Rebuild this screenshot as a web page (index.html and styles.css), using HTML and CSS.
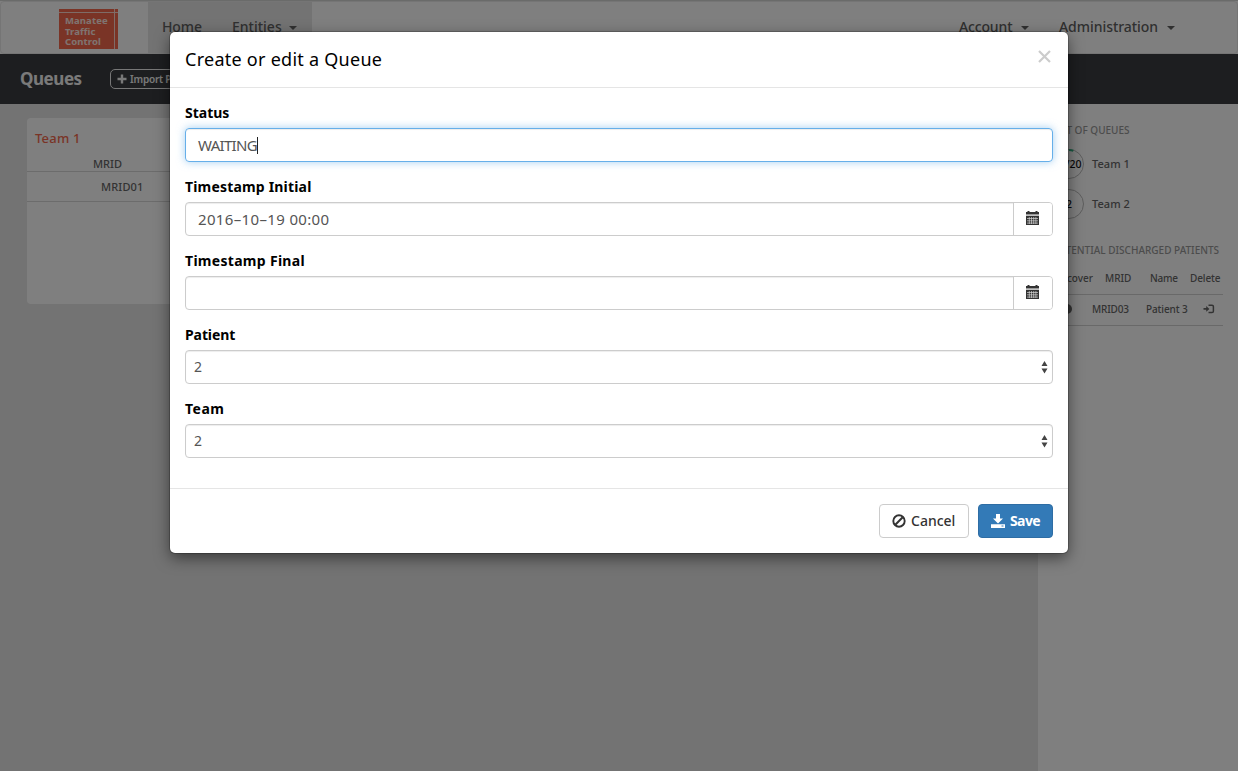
FILE: index.html
```html
<!DOCTYPE html>
<html lang="en">
<head>
<meta charset="utf-8">
<title>Manatee Traffic Control</title>
<link rel="stylesheet" href="styles.css">
</head>
<body>
<div class="app">
  <nav class="navbar">
    <div class="logo"><span class="logo-text">Manatee<br>Traffic<br>Control</span></div>
    <div class="nav-left">
      <span class="nav-home">Home</span>
      <span class="nav-entities">Entities</span><i class="caret"></i>
    </div>
    <div class="nav-right">
      <span class="nav-account">Account</span><i class="caret"></i>
      <span class="nav-admin">Administration</span><i class="caret"></i>
    </div>
  </nav>
  <header class="toolbar">
    <h1 class="toolbar-title">Queues</h1>
    <button class="import"><svg width="10" height="10" viewBox="0 0 10 10"><path d="M5 .5v9M.5 5h9" stroke="currentColor" stroke-width="2.4"/></svg>Import Patient</button>
  </header>
  <div class="content">
    <main class="board">
      <section class="team-card">
        <h2 class="team-title">Team 1</h2>
        <div class="team-head">MRID</div>
        <div class="team-row">MRID01</div>
      </section>
    </main>
    <aside class="sidebar">
      <h3 class="side-title">LIST OF QUEUES</h3>
      <div class="queue"><div class="ring ring-progress">2/20<svg class="arc" width="30" height="30" viewBox="0 0 30 30"><path d="M15 1A14 14 0 0 1 19.3 1.7" fill="none" stroke="#30b384" stroke-width="2"/></svg></div><span class="queue-name">Team 1</span></div>
      <div class="queue"><div class="ring">2</div><span class="queue-name">Team 2</span></div>
      <h3 class="side-title discharged">POTENTIAL DISCHARGED PATIENTS</h3>
      <div class="patients patients-head"><span class="p-recover">Recover</span><span class="p-mrid-head">MRID</span><span class="p-name-head">Name</span><span class="p-delete">Delete</span></div>
      <div class="patients patients-row">
        <span class="dot"></span><span class="p-mrid">MRID03</span><span class="p-name">Patient 3</span>
        <svg class="exit" width="12" height="10" viewBox="0 0 12 10"><path d="M5.5 1.2H9Q10.4 1.2 10.4 2.6V7.2Q10.4 8.6 9 8.6H5.5" fill="none" stroke="currentColor" stroke-width="1.5"/><path d="M.5 4H3.2V2L6.4 4.9 3.2 7.8V5.8H.5Z" fill="currentColor"/></svg>
      </div>
    </aside>
  </div>
</div>
<div class="backdrop">
  <form class="modal">
    <div class="modal-header">
      <h4 class="modal-title">Create or edit a Queue</h4>
      <svg class="close" width="13" height="13" viewBox="0 0 13 13"><path d="M1 1 12 12M12 1 1 12" stroke="currentColor" stroke-width="2.2"/></svg>
    </div>
    <div class="modal-body">
      <div class="field"><span class="label">Status</span><div class="control focused"><span class="v-status">WAITING</span><i class="cursor"></i></div></div>
      <div class="field"><span class="label l-initial">Timestamp Initial</span>
        <div class="control dated"><span class="v-date">2016–10–19 00:00</span><span class="addon"><svg width="13" height="14" viewBox="0 0 13 14"><path fill="#333" d="M0 1H1.5V0H3.5V1H9.5V0H11.5V1H13V3H0ZM0 5H13V14H0Z"/><path fill="#999" d="M0 3H13V4.6H0Z"/><path d="M1 7.5H12M1 9.8H12M1 12.1H12M3.3 6V13M5.5 6V13M7.7 6V13M9.9 6V13" stroke="#ddd" stroke-width=".65"/></svg></span></div></div>
      <div class="field"><span class="label l-final">Timestamp Final</span>
        <div class="control dated"><span></span><span class="addon"><svg width="13" height="14" viewBox="0 0 13 14"><path fill="#333" d="M0 1H1.5V0H3.5V1H9.5V0H11.5V1H13V3H0ZM0 5H13V14H0Z"/><path fill="#999" d="M0 3H13V4.6H0Z"/><path d="M1 7.5H12M1 9.8H12M1 12.1H12M3.3 6V13M5.5 6V13M7.7 6V13M9.9 6V13" stroke="#ddd" stroke-width=".65"/></svg></span></div></div>
      <div class="field"><span class="label l-patient">Patient</span><div class="control select"><span>2</span><svg width="7" height="13" viewBox="0 0 7 13"><path d="M3.5 0 6.5 5H.5ZM.5 7.5H6.5L3.5 12.5Z" fill="#444"/></svg></div></div>
      <div class="field"><span class="label l-team">Team</span><div class="control select"><span>2</span><svg width="7" height="13" viewBox="0 0 7 13"><path d="M3.5 0 6.5 5H.5ZM.5 7.5H6.5L3.5 12.5Z" fill="#444"/></svg></div></div>
    </div>
    <div class="modal-footer">
      <button type="button" class="btn cancel"><svg width="14" height="14" viewBox="0 0 14 14"><circle cx="7" cy="7" r="5.7" fill="none" stroke="currentColor" stroke-width="1.9"/><path d="M3.3 10.7 10.7 3.3" stroke="currentColor" stroke-width="2"/></svg><span class="t-cancel">Cancel</span></button>
      <button type="button" class="btn save"><svg width="14" height="14" viewBox="0 0 14 14"><path d="M5 0H9V4.5H12L7 9.6 2 4.5H5ZM0 10.2H14V14H0Z" fill="currentColor"/><path d="M10.5 12H12.5" stroke="#337ab7"/></svg><span class="t-save">Save</span></button>
    </div>
  </form>
</div>
</body>
</html>
```
FILE: styles.css
```css
* { box-sizing: border-box; }
body { margin: 0; width: 1238px; height: 771px; overflow: hidden; font: 14px/20px "Noto Sans", sans-serif; color: #666; }
h1, h2, h3, h4 { margin: 0; font-weight: 400; }
svg { display: block; flex: none; }
span { white-space: nowrap; }
button { font: inherit; }
.app { height: 771px; border-top: 1px solid #d5d7d5; display: flex; flex-direction: column; background: #fff; }

.navbar { height: 53px; flex: none; display: flex; border: 1px solid #eaeaea; border-radius: 4px; background: #fff; }
.logo { width: 59px; height: 40px; margin: 7px 0 0 58px; padding: 7px 0 0 6px; background: linear-gradient(#ffd9cf, #ffd9cf) 55px 0 / 1px 100% no-repeat, linear-gradient(#ffd9cf, #ffd9cf) 0 3px / 100% 1px no-repeat, #f4694d; }
.logo-text { display: block; font-weight: 700; font-size: 9.5px; line-height: 10.6px; color: #ffe9e2; letter-spacing: .1px; }
.nav-left { width: 164px; height: 51px; margin-left: 30px; padding: 15px 0 0 14px; background: #e7e7e7; display: flex; }
.nav-left, .nav-right { color: #606060; font-weight: 500; }
.nav-home { width: 40px; letter-spacing: -.1px; }
.nav-entities { width: 50px; margin-left: 30px; }
.nav-right { margin-left: auto; padding: 15px 62px 0 0; display: flex; }
.nav-account { width: 55px; letter-spacing: -.15px; }
.nav-admin { width: 101px; margin-left: 30px; letter-spacing: -.05px; }
.caret { margin: 9px 0 0 7px; width: 8px; height: 4px; background: currentColor; clip-path: polygon(0 0, 100% 0, 50% 100%); }

.toolbar { height: 50px; flex: none; background: #3b3d40; display: flex; align-items: center; padding-left: 20px; }
.toolbar-title { width: 90px; font-size: 17px; font-weight: 700; letter-spacing: -.45px; color: #f5f5f5; }
.import { height: 20px; width: 120px; padding: 0 6px; display: flex; align-items: center; gap: 3px; background: transparent; border: 1px solid #eee; border-radius: 5px; color: #f3f3f3; font-size: 10px; font-weight: 600; letter-spacing: -.2px; white-space: nowrap; }

.content { flex: 1; display: flex; }
.board { width: 1038px; background: #e6e6e6; padding: 14px 27px; }
.team-card { width: 330px; height: 186px; border-radius: 4px; background: #fff; font-size: 11px; font-weight: 500; }
.team-title { padding: 10px 0 0 8px; font-size: 13px; font-weight: 500; line-height: 20px; letter-spacing: .2px; color: #f4694d; }
.team-head { height: 24px; padding: 6px 0 0 66px; border-bottom: 1px solid #d9d9d9; }
.team-row { height: 30px; padding: 5px 0 0 74px; letter-spacing: .15px; border-bottom: 1px solid #d9d9d9; }

.sidebar { width: 200px; background: #fff; padding: 16px 15px 0 14px; font-size: 11px; font-weight: 500; }
.side-title { font-size: 10px; font-weight: 500; line-height: 20px; color: #999; white-space: nowrap; }
.queue { height: 40px; display: flex; align-items: center; }
.side-title + .queue { margin-top: 4px; }
.queue-name { letter-spacing: .05px; }
.ring { position: relative; width: 30px; height: 30px; border: 1px solid #bbb; border-radius: 50%; margin: 0 8px 0 2px; display: flex; justify-content: center; line-height: 28px; color: #111; font-size: 10.5px; }
.ring-progress { padding-left: 3px; }
.arc { position: absolute; top: -1px; left: -1px; }
.discharged { margin-top: 16px; }
.patients { height: 31px; display: flex; align-items: center; border-bottom: 1px solid #d2d2d2; font-size: 10px; }
.patients-head { height: 35px; padding-top: 2px; }
.patients-row { padding-bottom: 2px; }
.p-recover { width: 41px; text-align: right; }
.p-mrid-head { width: 25px; margin-left: 12px; }
.p-name-head { width: 28px; margin-left: 20px; letter-spacing: -.2px; }
.p-delete { margin-left: 12px; letter-spacing: -.1px; }
.dot { width: 10px; height: 10px; border-radius: 50%; background: #666; margin-left: 10px; }
.p-mrid { width: 37px; margin-left: 20px; letter-spacing: -.15px; }
.p-name { width: 42px; margin-left: 17px; letter-spacing: -.1px; }
.exit { margin-left: 15px; }

.backdrop { position: absolute; inset: 0; background: rgba(0, 0, 0, .5); padding: 32px 0 0 170px; }
.modal { width: 898px; height: 521px; background: #fff; border-radius: 5px; box-shadow: 0 0 0 1px rgba(0, 0, 0, .2), 0 5px 15px rgba(0, 0, 0, .5); color: #000; }
.modal-header { height: 56px; display: flex; justify-content: space-between; padding: 17px 17px 0 15px; border-bottom: 1px solid #e5e5e5; }
.modal-title { font-size: 18px; line-height: 20px; letter-spacing: .26px; }
.close { margin-top: 1px; color: #ccc; }
.modal-body { height: 400px; padding: 15px; display: flex; flex-direction: column; gap: 15px; }
.field { height: 59px; }
.label { display: block; height: 25px; font-weight: 700; line-height: 20px; }
.l-initial { letter-spacing: .18px; }
.l-final { letter-spacing: .3px; }
.l-patient { letter-spacing: -.1px; }
.l-team { letter-spacing: .5px; }
.control { height: 34px; display: flex; align-items: center; border: 1px solid #ccc; border-radius: 4px; padding-left: 12px; color: #555; font-size: 15px; box-shadow: inset 0 1px 1px rgba(0, 0, 0, .075); }
.v-status { letter-spacing: -.7px; }
.v-date { letter-spacing: .35px; }
.focused { border-color: #66afe9; box-shadow: inset 0 1px 1px rgba(0, 0, 0, .075), 0 0 8px rgba(102, 175, 233, .6); }
.cursor { width: 1px; height: 17px; background: #222; }
.dated { justify-content: space-between; }
.addon { width: 39px; height: 32px; padding: 8px 0 0 12px; border-left: 1px solid #ccc; background: #fff; border-radius: 0 3px 3px 0; }
.select { justify-content: space-between; padding: 0 4px 0 8px; font-size: 14px; }
.modal-footer { height: 65px; display: flex; justify-content: flex-end; gap: 9px; padding: 15px; border-top: 1px solid #e5e5e5; }
.btn { height: 34px; padding: 0 12px; display: flex; align-items: center; gap: 5px; border-radius: 4px; }
.cancel { width: 90px; background: #fff; border: 1px solid #ccc; color: #333; }
.t-cancel { font-weight: 500; }
.save { width: 75px; background: #337ab7; border: 1px solid #2e6da4; color: #fff; font-weight: 700; }
.t-save { letter-spacing: -.6px; }
```
